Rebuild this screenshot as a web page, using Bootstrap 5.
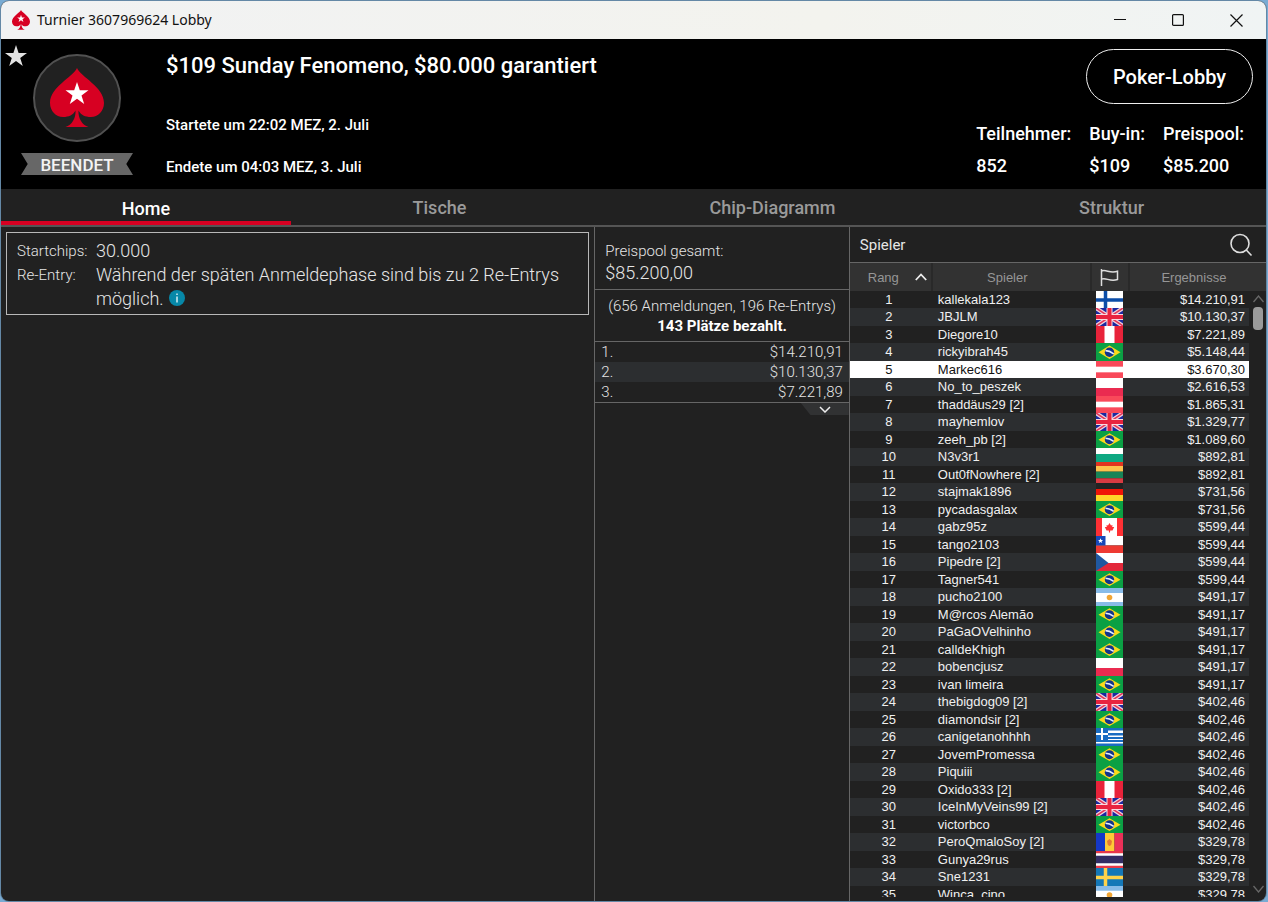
<!DOCTYPE html>
<html lang="de" data-bs-theme="dark">
<head>
<meta charset="utf-8">
<meta name="viewport" content="width=device-width, initial-scale=1">
<title>Turnier 3607969624 Lobby</title>
<link rel="stylesheet" href="https://cdn.jsdelivr.net/npm/bootstrap@5.3.0/dist/css/bootstrap.min.css">
<style>
  :root { --panel: #212121; --stripe: #2c2e30; --line: #666; --brand: #d70022; }
  body { font-family: Roboto, sans-serif; background: #79abd3; color: #e6e6e6; padding: 1px 2px 1px 1px; line-height: 20px; }
  .app-window { background: var(--panel); border-radius: 8px; overflow: hidden; box-shadow: 0 0 0 1px #6488a6; }
  .title-bar { background: linear-gradient(90deg, #f1f2f3, #f3f3ee 65%, #f0f4f4); color: #111; height: 38px; font: 14px/20px "Noto Sans", sans-serif; padding: 0 1px 0 10px; gap: 6px; }
  .title-bar .win-btns button { width: 58px; height: 38px; border: 0; background: none; color: #111; padding: 0; display: grid; place-items: center; }
  .hero { background: #000; height: 150px; color: #fff; font-weight: 500; }
  .hero-badge { width: 132px; padding-top: 15px; padding-left: 20px; }
  .logo-disc { width: 88px; height: 88px; border: 2px solid #515151; border-radius: 50%; background: var(--panel); display: grid; place-items: center; }
  .fav-btn { left: 4px; top: 6px; border: 0; background: none; padding: 0; line-height: 0; }
  .ribbon { width: 112px; height: 22px; margin-top: 11px; background: #676767; font-size: 17px; line-height: 24px; text-align: center; color: #f4f4f4;
    clip-path: polygon(0 0, 100% 0, 94% 50%, 100% 100%, 0 100%, 6% 50%); }
  .hero-text { padding: 15px 0 0 33px; }
  .hero-text h1 { font-size: 22px; line-height: 24px; font-weight: 500; margin: 0 0 37px; }
  .hero-text p { font-size: 15px; line-height: 20px; margin: 0 0 22px; }
  .lobby-btn { width: 167px; height: 55px; border: 1px solid #eee; border-radius: 28px; background: none; color: #fff; font-size: 20px; font-weight: 500; margin: 10px 13px 0 0; }
  .facts { margin: 14px 22px 0 0; gap: 18px; font-size: 18px; line-height: 32px; }
  .facts dt, .facts dd { font-weight: 500; margin: 0; }
  .tab-row { height: 38px; border-bottom: 2px solid #555; font-size: 18px; font-weight: 500; }
  .tab-row a { color: #9a9a9a; text-align: center; text-decoration: none; line-height: 38px; height: 36px; flex: 1 1 0; min-width: 0; }
  .tab-row .t-home { flex-grow: 290; } .tab-row .t-tables { flex-grow: 297; }
  .tab-row .t-chips { flex-grow: 369; } .tab-row .t-struct { flex-grow: 309; }
  .tab-row a.active { color: #fff; border-bottom: 4px solid var(--brand); line-height: 40px; }
  .col-home { flex: 1 1 0; min-width: 0; padding: 5px 5px 0; font-weight: 300; }
  .col-prizes { flex: 0 0 20.2%; min-width: 0; border-left: 1px solid var(--line); border-right: 1px solid var(--line); font-size: 15px; font-weight: 300; }
  .col-players { flex: 0 0 32.9%; min-width: 0; }
  .info-box { border: 1px solid #b8b8b8; margin: 0; padding: 6px 10px 3px; display: grid; grid-template-columns: 79px 1fr; font-size: 18px; line-height: 24px; }
  .info-box dt { font-size: 15px; font-weight: 300; } .info-box dd { margin: 0; }
  .info-box svg { margin: -4px 0 0 1px; }
  .prize-total { padding: 13px 10px 4px; border-bottom: 1px solid var(--line); height: 63px; line-height: 22px; }
  .prize-total strong { font-size: 18px; font-weight: 300; }
  .prize-note { height: 52px; padding-top: 6px; border-bottom: 1px solid var(--line); text-align: center; white-space: nowrap; }
  .prize-note strong { font-weight: 700; color: #fff; }
  .prize-table { width: 100%; border-bottom: 1px solid var(--line); }
  .prize-table td, .prize-table th { height: 20px; padding: 0 6px; line-height: 20px; font-weight: 300; }
  .prize-table tr:nth-child(even) { background: var(--stripe); }
  .more-btn { display: block; width: 48px; height: 12px; margin-left: auto; border: 0; padding: 0; background: #313233; clip-path: polygon(0 0, 100% 0, 100% 100%, 20% 100%); line-height: 0; color: #eee; }
  .players-head { height: 36px; border-bottom: 1px solid var(--line); padding: 0 13px 0 10px; font-size: 15px; }
  .players-head button { border: 0; background: none; padding: 0; color: #dedede; line-height: 0; }
  .list-area { flex: 1 1 0; overflow: hidden; margin-bottom: 4px; }
  .rank-table { width: 100%; table-layout: fixed; font: 13px/17px "Liberation Sans", sans-serif; color: #f0f0f0; }
  .rank-table thead th { height: 28px; padding: 0; background: #323232; color: #969696; font-weight: 400; text-align: center; border-right: 2px solid #292929; vertical-align: middle; }
  .rank-table tbody td { height: 17px; padding: 0; white-space: nowrap; line-height: 17px; }
  .rank-table tbody tr:nth-child(even) td { height: 18px; line-height: 18px; }
  .rank-table tbody tr:nth-child(even) td:not(:last-child) { background: var(--stripe); }
  .rank-table tbody tr.me td:not(:last-child) { background: #fff; color: #111; }
  .rank-table .c-rank { text-align: center; padding-right: 4px; }
  .rank-table .c-name { padding-left: 6px; }
  .rank-table .c-sum { text-align: right; padding-right: 4px; }
  .rank-table .c-flag svg { display: block; width: 27px; height: 17px; margin-left: 5px; }
  .rank-table tr:nth-child(even) .c-flag svg { height: 18px; }
  .scroll-rail { position: absolute; right: 2px; top: 28px; bottom: 0; width: 12px; color: #686868; }
  .scroll-thumb { width: 10px; height: 23px; border-radius: 4px; background: #9b9b9b; margin: 0 auto auto; }
</style>
<script src="https://cdn.jsdelivr.net/npm/bootstrap@5.3.0/dist/js/bootstrap.bundle.min.js"></script>
</head>
<body class="vh-100">
<svg width="0" height="0" class="position-absolute" aria-hidden="true">
  <symbol id="spade" viewBox="0 0 54 60">
    <path fill="#d70022" d="M27 0C23 9 0 19 0 35c0 8 6 14 13 14 6 0 10-2 12.500-6.500C26 50 22 57 15.500 59h23C32 57 28 50 28.500 42.500 31 47 35 49 41 49c7 0 13-6 13-14C54 19 31 9 27 0Z"/>
    <path fill="#fff" d="m27 14 2.800 8.300h8.700l-7 5.200 2.700 8.400-7.200-5.200-7.200 5.200 2.700-8.400-7-5.200h8.700z"/>
  </symbol>
  <symbol id="fi" viewBox="0 0 27 18" preserveAspectRatio="none"><path fill="#fff" d="M0 0h27v18H0z"/><path stroke="#0b4da8" stroke-width="3.500" d="M0 9.500h27M9.500 0v18"/></symbol>
  <symbol id="gb" viewBox="0 0 27 18" preserveAspectRatio="none"><path fill="#1a28a0" d="M0 0h27v18H0z"/><path stroke="#f1d3dc" stroke-width="4" d="m0 0 27 18M27 0 0 18"/><path stroke="#e5375a" stroke-width="1.500" d="m0 0 27 18M27 0 0 18"/><path stroke="#fbd9df" stroke-width="6" d="M0 9h27M13.500 0v18"/><path stroke="#e8233f" stroke-width="4" d="M0 9h27M13.500 0v18"/></symbol>
  <symbol id="pe" viewBox="0 0 27 18" preserveAspectRatio="none"><path fill="#e8233a" d="M0 0h27v18H0z"/><path fill="#fff" d="M8.500 0h10v18h-10z"/></symbol>
  <symbol id="br" viewBox="0 0 27 18" preserveAspectRatio="none"><path fill="#0ba044" d="M0 0h27v18H0z"/><path fill="#fbd91b" d="m13.500 2.500 11 6.700-11 6.700-11-6.700z"/><circle cx="13.500" cy="9.200" r="4.700" fill="#12348c"/><path stroke="#e9eef8" stroke-width="1.600" fill="none" d="M9.500 7.600q4 0 8.200 3.300"/></symbol>
  <symbol id="at" viewBox="0 0 27 18" preserveAspectRatio="none"><path fill="#f9495a" d="M0 0h27v18H0z"/><path fill="#fff" d="M0 6h27v6H0z"/></symbol>
  <symbol id="pl" viewBox="0 0 27 18" preserveAspectRatio="none"><path fill="#fff" d="M0 0h27v10H0z"/><path fill="#ea2b50" d="M0 10h27v8H0z"/></symbol>
  <symbol id="bg" viewBox="0 0 27 18" preserveAspectRatio="none"><path fill="#fff" d="M0 0h27v6H0z"/><path fill="#0ea882" d="M0 6h27v8H0z"/><path fill="#e03420" d="M0 14h27v4H0z"/></symbol>
  <symbol id="lt" viewBox="0 0 27 18" preserveAspectRatio="none"><path fill="#fcc24c" d="M0 0h27v6H0z"/><path fill="#178457" d="M0 6h27v7H0z"/><path fill="#d83b42" d="M0 13h27v5H0z"/></symbol>
  <symbol id="de" viewBox="0 0 27 18" preserveAspectRatio="none"><path fill="#232323" d="M0 0h27v6H0z"/><path fill="#f01508" d="M0 6h27v6H0z"/><path fill="#ffd529" d="M0 12h27v6H0z"/></symbol>
  <symbol id="ca" viewBox="0 0 27 18" preserveAspectRatio="none"><path fill="#ff3034" d="M0 0h27v18H0z"/><path fill="#fff" d="M6 0h15v18H6z"/><path fill="#ff3034" d="m13.500 5 1.500 2.500 1.500-.5-.3 2 2 0-1.700 3.500h-2.300l-.2 2h-1l-.2-2h-2.300L8.800 9h2l-.3-2 1.500.5z"/></symbol>
  <symbol id="cl" viewBox="0 0 27 18" preserveAspectRatio="none"><path fill="#fff" d="M0 0h27v10H0z"/><path fill="#ee3a32" d="M0 10h27v8H0z"/><path fill="#1747b8" d="M0 0h9.500v10H0z"/><path fill="#fff" d="m4.500 2.500.8 1.800h1.800L5.600 5.500l.6 1.800-1.700-1-1.700 1 .6-1.800L2 4.300h1.800z"/></symbol>
  <symbol id="cz" viewBox="0 0 27 18" preserveAspectRatio="none"><path fill="#fff" d="M0 0h27v10H0z"/><path fill="#e3283a" d="M0 10h27v8H0z"/><path fill="#2058a0" d="m0 0 12.500 10L0 18z"/></symbol>
  <symbol id="ar" viewBox="0 0 27 18" preserveAspectRatio="none"><path fill="#88bbe8" d="M0 0h27v18H0z"/><path fill="#fff" d="M0 5h27v9H0z"/><circle cx="13.500" cy="9.500" r="2.800" fill="#f1a534"/></symbol>
  <symbol id="gr" viewBox="0 0 27 18" preserveAspectRatio="none"><path fill="#fff" d="M0 0h27v18H0z"/><path fill="#1a6cc2" d="M0 0h27v2.500H0zm12 5h15v2.500H12zm0 4h15v2H12zM0 12h27v2H0zm0 3.500h27V18H0zM0 0h12v12H0z"/><path stroke="#fff" stroke-width="2" d="M0 6h12M6 0v12"/></symbol>
  <symbol id="md" viewBox="0 0 27 18" preserveAspectRatio="none"><path fill="#1538c8" d="M0 0h9v18H0z"/><path fill="#ffc936" d="M9 0h9.500v18H9z"/><path fill="#ea3058" d="M18.500 0H27v18h-8.500z"/><path fill="#e57a32" d="m13.500 6 2.500 2-.8 4-1.700 1-1.700-1-.8-4z"/></symbol>
  <symbol id="th" viewBox="0 0 27 18" preserveAspectRatio="none"><path fill="#fff" d="M0 0h27v18H0z"/><path fill="#e83848" d="M0 0h27v2.500H0zm0 15.500h27V18H0z"/><path fill="#322d64" d="M0 5h27v8H0z"/></symbol>
  <symbol id="se" viewBox="0 0 27 18" preserveAspectRatio="none"><path fill="#1478b8" d="M0 0h27v18H0z"/><path stroke="#ffd34a" stroke-width="3.500" d="M0 9.500h27M9.500 0v18"/></symbol>
</svg>

<div class="app-window h-100 d-flex flex-column">
  <div class="title-bar d-flex align-items-center flex-shrink-0">
    <svg width="20" height="20" class="flex-shrink-0"><use href="#spade"/></svg>
    <span class="me-auto text-nowrap">Turnier 3607969624 Lobby</span>
    <div class="win-btns d-flex">
      <button type="button" aria-label="Minimieren"><svg width="12" height="12"><path stroke="currentColor" d="M0 5.500h12"/></svg></button>
      <button type="button" aria-label="Maximieren"><svg width="12" height="12"><rect x=".6" y=".6" width="10.800" height="10.800" rx="1" fill="none" stroke="currentColor" stroke-width="1.200"/></svg></button>
      <button type="button" aria-label="Schließen"><svg width="13" height="13"><path stroke="currentColor" stroke-width="1.200" d="m.5.500 12 12m0-12-12 12"/></svg></button>
    </div>
  </div>

  <header class="hero d-flex position-relative flex-shrink-0">
    <button type="button" class="fav-btn position-absolute" aria-label="Favorit"><svg width="22" height="22" viewBox="0 0 22 22"><path fill="#e2e2e2" d="m11 0 2.600 8H22l-6.800 4.900 2.600 8.100L11 16l-6.800 5 2.600-8.100L0 8h8.400z"/></svg></button>
    <div class="hero-badge d-flex flex-column align-items-center flex-shrink-0">
      <div class="logo-disc"><svg width="54" height="60"><use href="#spade"/></svg></div>
      <div class="ribbon">BEENDET</div>
    </div>
    <div class="hero-text me-auto text-nowrap">
      <h1>$109 Sunday Fenomeno, $80.000 garantiert</h1>
      <p>Startete um 22:02 MEZ, 2. Juli</p>
      <p>Endete um 04:03 MEZ, 3. Juli</p>
    </div>
    <div class="d-flex flex-column align-items-end">
      <button type="button" class="lobby-btn">Poker-Lobby</button>
      <dl class="facts d-flex">
        <div><dt>Teilnehmer:</dt><dd>852</dd></div>
        <div><dt>Buy-in:</dt><dd>$109</dd></div>
        <div><dt>Preispool:</dt><dd>$85.200</dd></div>
      </dl>
    </div>
  </header>

  <nav class="tab-row d-flex flex-shrink-0">
    <a href="#home" class="t-home active" aria-current="page">Home</a>
    <a href="#tische" class="t-tables">Tische</a>
    <a href="#chips" class="t-chips">Chip-Diagramm</a>
    <a href="#struktur" class="t-struct">Struktur</a>
  </nav>

  <main class="d-flex flex-grow-1 overflow-hidden">
    <section class="col-home">
      <dl class="info-box">
        <dt>Startchips:</dt><dd>30.000</dd>
        <dt>Re-Entry:</dt><dd>Während der späten Anmeldephase sind bis zu 2 Re-Entrys möglich. <svg width="16" height="16" role="img" aria-label="Info"><circle cx="8" cy="8" r="8" fill="#0788a8"/><path stroke="#d5edf3" stroke-width="1.500" d="M8 3.500V5m0 1.500V12.500"/></svg></dd>
      </dl>
    </section>

    <section class="col-prizes">
      <div class="prize-total"><div>Preispool gesamt:</div><strong>$85.200,00</strong></div>
      <div class="prize-note"><div>(656 Anmeldungen, 196 Re-Entrys)</div><strong>143 Plätze bezahlt.</strong></div>
      <table class="prize-table">
        <tbody>
          <tr><th scope="row">1.</th><td class="text-end">$14.210,91</td></tr>
          <tr><th scope="row">2.</th><td class="text-end">$10.130,37</td></tr>
          <tr><th scope="row">3.</th><td class="text-end">$7.221,89</td></tr>
        </tbody>
      </table>
      <button type="button" class="more-btn" aria-label="Mehr anzeigen"><svg width="12" height="7"><path fill="none" stroke="currentColor" stroke-width="1.500" d="m1 1 5 5 5-5"/></svg></button>
    </section>

    <section class="col-players d-flex flex-column">
      <div class="players-head d-flex align-items-center justify-content-between flex-shrink-0">
        <span>Spieler</span>
        <button type="button" aria-label="Spieler suchen"><svg width="24" height="24" fill="none" stroke="currentColor" stroke-width="1.600"><circle cx="11" cy="10.500" r="9"/><path d="m17.300 17 5.200 5.500"/></svg></button>
      </div>
      <div class="list-area position-relative">
        <table class="rank-table">
          <colgroup><col style="width:82px"><col style="width:159px"><col style="width:38px"><col><col style="width:17px"></colgroup>
          <thead><tr>
            <th scope="col"><span class="d-flex align-items-center justify-content-end gap-3 pe-1">Rang <svg width="12" height="8"><path fill="none" stroke="#eee" stroke-width="1.800" d="m.8 7 5.200-5.500L11.200 7"/></svg></span></th>
            <th scope="col" class="pe-2">Spieler</th>
            <th scope="col" aria-label="Land"><svg width="19" height="17" fill="none" stroke="#dedede" stroke-width="1.500"><path d="M1.500 0v17M1.500 2c5-2 8 3 16 .3v8.200c-8 2.600-11-2.300-16-.4"/></svg></th>
            <th scope="col" colspan="2" class="pe-2 border-end-0">Ergebnisse</th>
          </tr></thead>
          <tbody id="players"></tbody>
        </table>
        <div class="scroll-rail d-flex flex-column align-items-center" aria-hidden="true">
          <svg width="11" height="8" class="flex-shrink-0 mt-1"><path fill="none" stroke="currentColor" stroke-width="1.300" d="m.5 7 5-6 5 6"/></svg>
          <div class="scroll-thumb flex-shrink-0 mt-1"></div>
          <svg width="11" height="8" class="flex-shrink-0 mb-1"><path fill="none" stroke="currentColor" stroke-width="1.300" d="m.5 1 5 6 5-6"/></svg>
        </div>
      </div>
    </section>
  </main>
</div>

<script>
  const players = [
    ['kallekala123','fi','14.210,91'],['JBJLM','gb','10.130,37'],['Diegore10','pe','7.221,89'],['rickyibrah45','br','5.148,44'],
    ['Markec616','at','3.670,30'],['No_to_peszek','pl','2.616,53'],['thaddäus29 [2]','at','1.865,31'],['mayhemlov','gb','1.329,77'],
    ['zeeh_pb [2]','br','1.089,60'],['N3v3r1','bg','892,81'],['Out0fNowhere [2]','lt','892,81'],['stajmak1896','de','731,56'],
    ['pycadasgalax','br','731,56'],['gabz95z','ca','599,44'],['tango2103','cl','599,44'],['Pipedre [2]','cz','599,44'],
    ['Tagner541','br','599,44'],['pucho2100','ar','491,17'],['M@rcos Alemão','br','491,17'],['PaGaOVelhinho','br','491,17'],
    ['calldeKhigh','br','491,17'],['bobencjusz','pl','491,17'],['ivan limeira','br','491,17'],['thebigdog09 [2]','gb','402,46'],
    ['diamondsir [2]','br','402,46'],['canigetanohhhh','gr','402,46'],['JovemPromessa','br','402,46'],['Piquiii','br','402,46'],
    ['Oxido333 [2]','pe','402,46'],['IceInMyVeins99 [2]','gb','402,46'],['victorbco','br','402,46'],['PeroQmaloSoy [2]','md','329,78'],
    ['Gunya29rus','th','329,78'],['Sne1231','se','329,78'],['Winca_cino','ar','329,78']
  ];
  document.getElementById('players').innerHTML = players.map(([name, flag, sum], i) =>
    `<tr${name === 'Markec616' ? ' class="me"' : ''}><td class="c-rank">${i + 1}</td><td class="c-name">${name}</td>` +
    `<td class="c-flag"><svg><use href="#${flag}"/></svg></td><td class="c-sum">$${sum}</td><td></td></tr>`).join('');
</script>
</body>
</html>
